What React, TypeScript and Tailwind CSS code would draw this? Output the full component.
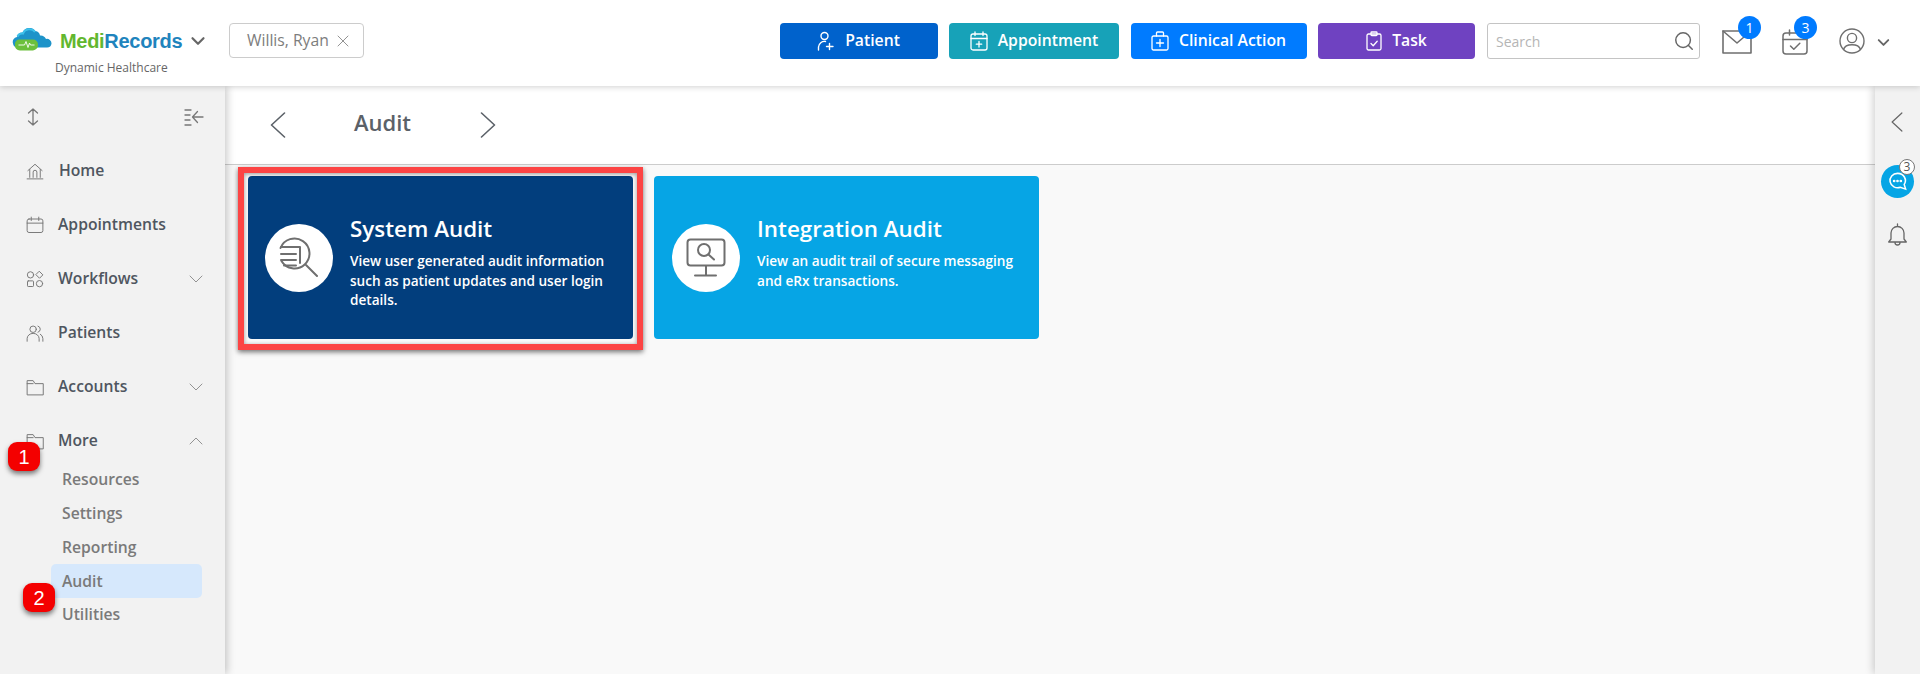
import React from "react";
import { ChevronDown, ChevronUp, X, Search } from "lucide-react";

type IP = { className?: string };
const S = ({ children, className, box = "0 0 24 24", sw = 1.3 }: { children: React.ReactNode; className?: string; box?: string; sw?: number }) => (
  <svg viewBox={box} fill="none" stroke="currentColor" strokeWidth={sw} strokeLinecap="round" strokeLinejoin="round" className={className}>
    {children}
  </svg>
);

const HomeIcon = ({ className }: IP) => (
  <S className={className}>
    <path d="M2.5 11.5 12 3l9.5 8.5M5 10v10.5M19 10v10.5M9.5 20.5v-7a2.5 2.5 0 0 1 5 0v7" />
    <path d="M1.5 22.5h21" />
  </S>
);
const CalIcon = ({ className }: IP) => (
  <S className={className}>
    <rect x="1.5" y="4" width="21" height="18" rx="2.5" />
    <path d="M1.5 9.5h21M7 1.5v4.5M17 1.5v4.5" />
  </S>
);
const FlowIcon = ({ className }: IP) => (
  <S className={className}>
    <circle cx="6" cy="6.5" r="4.2" />
    <path d="M18 2l4.5 4.5L18 11l-4.5-4.5z" />
    <rect x="2" y="14.5" width="8" height="7.5" rx="1" />
    <circle cx="18" cy="18.2" r="4.2" />
  </S>
);
const PeopleIcon = ({ className }: IP) => (
  <S className={className}>
    <circle cx="9.5" cy="7" r="4.3" />
    <path d="M1.5 23v-3.5a8 7 0 0 1 16 0V23" />
    <path d="M16 2.8a4.3 4.3 0 0 1 0 8.2M19 13.5a7 7 0 0 1 3.5 6V23" />
  </S>
);
const FolderIcon = ({ className }: IP) => (
  <S className={className}>
    <path d="M1.5 22V3.5h8l2.5 4h11V22z" />
    <path d="M9.5 7.5H1.5" />
  </S>
);
const MailIcon = ({ className }: IP) => (
  <S className={className} box="0 0 30 24" sw={1.6}>
    <rect x="1" y="1" width="28" height="22" />
    <path d="M1 1l14 12L29 1" />
  </S>
);
const CalCheckIcon = ({ className }: IP) => (
  <S className={className} box="0 0 26 26" sw={1.5}>
    <rect x="1" y="4" width="24" height="21" rx="3" />
    <path d="M1 10.5h24M7.5 1v5M18.5 1v5M8.5 17l3.3 3.3 6-6" />
  </S>
);
const UserCircleIcon = ({ className }: IP) => (
  <S className={className} box="0 0 26 26" sw={1.4}>
    <circle cx="13" cy="13" r="12" />
    <circle cx="13" cy="10" r="4.6" />
    <path d="M4.5 21.5c1-3.5 4.5-4.8 8.5-4.8s7.5 1.3 8.5 4.8" />
  </S>
);
const AuditIcon = () => (
  <S className="h-[42px] w-[42px] text-[#6f6f6f]" box="0 0 42 42" sw={2}>
    <path d="M2.5 11a15 15 0 1 1 1 13" />
    <path d="M3 10h19v16M3 17h15M3 23h15M6 28.5h12M28 28l11 11" />
  </S>
);
const MonitorIcon = () => (
  <S className="h-[40px] w-[40px] text-[#6f6f6f]" box="0 0 40 40" sw={2}>
    <rect x="1.5" y="1.5" width="37" height="26" rx="3" />
    <path d="M20 28v9M9 37.5h21" />
    <circle cx="18" cy="12" r="6" />
    <path d="M22.5 16.5l5.5 5" />
  </S>
);
const Chevron = ({ dir, className }: { dir: "l" | "r"; className: string }) => (
  <svg viewBox="0 0 16 26" fill="none" stroke="currentColor" strokeWidth="1.6" strokeLinecap="round" strokeLinejoin="round" className={className}>
    <path d={dir === "l" ? "M14.500 1 1.500 13l13 12" : "M1.500 1l13 12-13 12"} />
  </svg>
);
const Logo = () => (
  <svg viewBox="0 0 40 23" className="h-[23px] w-[40px]">
    <path d="M1 15.500a5 5 0 0 1 4-6.500 5.500 5.500 0 0 1 5.500-4.500 7.500 7.500 0 0 1 13-1.500 5.500 5.500 0 0 1 4.500 4.500 6 6 0 0 1 6 3.500 4.500 4.500 0 0 1 5.500 4.500 4.500 4.500 0 0 1-4.500 4H5a4.500 4.500 0 0 1-4-4z" fill="#1d93c9" />
    <path d="M5.500 8.500a5 5 0 0 1 5.500-3 7 7 0 0 1 12-1.500" stroke="#3cc0ea" strokeWidth="2" fill="none" />
    <path d="M3 16.500a4.500 4.500 0 0 1 5-5h13a5 5 0 0 1 5 5 5.500 5.500 0 0 1-5 6H8a5 5 0 0 1-5-6z" fill="#6cc03c" />
    <path d="M6.500 17h6l1.500-3.500 2 6 1.500-4.500 1 2h4" stroke="#fff" strokeWidth=".9" fill="none" />
  </svg>
);

const actions = [
  { t: "Patient", w: "w-[158px]", bg: "bg-[#0062cc]", k: "p" },
  { t: "Appointment", w: "w-[170px]", bg: "bg-[#17a2b8]", k: "a" },
  { t: "Clinical Action", w: "w-[176px]", bg: "bg-[#007bff]", k: "c" },
  { t: "Task", w: "w-[157px]", bg: "bg-[#6f42c1]", k: "t" },
];
const ActionIcon = ({ k }: { k: string }) => {
  if (k === "p")
    return (
      <S className="h-[20px] w-[18px]" box="0 0 18 20" sw={1.4}>
        <circle cx="7.5" cy="5" r="3.5" />
        <path d="M1.500 19v-3a6 6 0 0 1 7-5.500M12.500 12.500v6M9.500 15.500h6.500" />
      </S>
    );
  if (k === "a")
    return (
      <S className="h-[20px] w-[18px]" box="0 0 18 20" sw={1.3}>
        <rect x="1" y="3" width="16" height="16" rx="2" />
        <path d="M1 7.500h16M5 1v3.500M13 1v3.500M9 10.500v5.500M6.300 13.200h5.400" />
      </S>
    );
  if (k === "c")
    return (
      <S className="h-[20px] w-[18px]" box="0 0 18 20" sw={1.3}>
        <rect x="1" y="5" width="16" height="14" rx="1.500" />
        <path d="M5.500 5V2a1 1 0 0 1 1-1h5a1 1 0 0 1 1 1v3M9 8.500v7M5.500 12h7" />
      </S>
    );
  return (
    <S className="h-[20px] w-[16px]" box="0 0 16 20" sw={1.3}>
      <rect x="1" y="3" width="14" height="16" rx="1.500" />
      <rect x="5" y="1" width="6" height="3.500" rx=".8" />
      <path d="M5 12.500l2.200 2.200 4-4.500" />
    </S>
  );
};

const nav = [
  { t: "Home", I: HomeIcon, x: "pl-[1px]" },
  { t: "Appointments", I: CalIcon, x: "" },
  { t: "Workflows", I: FlowIcon, x: "", c: "d" },
  { t: "Patients", I: PeopleIcon, x: "" },
  { t: "Accounts", I: FolderIcon, x: "", c: "d" },
  { t: "More", I: FolderIcon, x: "", c: "u" },
];
const subs = ["Resources", "Settings", "Reporting", "Audit", "Utilities"];

const Card = ({ bg, pad, icon, title, lines }: { bg: string; pad: string; icon: React.ReactNode; title: string; lines: string[] }) => (
  <div className={`flex h-[163px] w-[384.5px] items-start rounded-[4px] pt-[37px] ${pad} ${bg}`}>
    <div className="mt-[11px] flex h-[68px] w-[68px] shrink-0 items-center justify-center rounded-full bg-white">{icon}</div>
    <div className="ml-[17px] text-white">
      <div className="text-[22.400px] font-semibold leading-[32px]">{title}</div>
      <div className="mt-[6px] text-[13.600px] font-semibold leading-[19.500px]">
        {lines.map((l) => (
          <div key={l}>{l}</div>
        ))}
      </div>
    </div>
  </div>
);

const Marker = ({ n, className }: { n: string; className: string }) => (
  <div className={`absolute flex h-[29px] w-[32px] items-center justify-center rounded-[9px] bg-[#f40000] text-[20px] text-white shadow-[0_3px_5px_rgba(0,0,0,0.5)] font-['Liberation_Sans',sans-serif] ${className}`}>
    {n}
  </div>
);

export default function App() {
  return (
    <div className="relative flex h-[674px] w-[1920px] flex-col overflow-hidden bg-white font-['Open_Sans',sans-serif]">
      <header className="relative z-20 flex h-[86px] shrink-0 items-start bg-white shadow-[0_1px_6px_rgba(0,0,0,0.18)]">
        <div className="ml-[12px] w-[217px] shrink-0">
          <div className="mt-[27px] flex h-[24px] items-center">
            <Logo />
            <span className="ml-[8px] mt-[3px] font-['Liberation_Sans',sans-serif] text-[20px] font-bold leading-[24px] tracking-[-0.3px]">
              <span className="text-[#62b72f]">Medi</span>
              <span className="text-[#1f84bd]">Records</span>
            </span>
            <ChevronDown className="ml-[5px] mt-[3px] h-[22px] w-[22px] text-[#666]" strokeWidth={2.4} />
          </div>
          <div className="ml-[43px] mt-[9px] text-[12px] font-medium leading-[16px] text-[#666]">Dynamic Healthcare</div>
        </div>
        <div className="mt-[23px] flex h-[35px] w-[135px] items-center rounded-[4px] border border-[#ccc] pl-[17px] text-[15.700px] text-[#7d7d7d]">
          Willis, Ryan
          <X className="ml-[4px] h-[20px] w-[20px]" strokeWidth={1} />
        </div>
        <div className="ml-auto mt-[23px] flex items-center gap-[11.500px]">
          {actions.map((a) => (
            <div key={a.t} className={`flex h-[36px] items-center justify-center gap-[10px] rounded-[4px] text-[15.750px] font-semibold text-white ${a.w} ${a.bg}`}>
              <ActionIcon k={a.k} />
              {a.t}
            </div>
          ))}
        </div>
        <div className="ml-[12px] mt-[23px] flex h-[36px] w-[213px] items-center justify-between rounded-[3px] border border-[#c4c4c4] pl-[8px] pr-[4px] text-[14px] text-[#b5b5b5]">
          Search
          <Search className="h-[22px] w-[22px] text-[#666]" strokeWidth={1.6} />
        </div>
        <div className="relative ml-[22px] mt-[30px] h-[24px] w-[30px]">
          <MailIcon className="h-[24px] w-[30px] text-[#6f6f6f]" />
          <span className="absolute left-[16px] top-[-14px] flex h-[23px] w-[23px] items-center justify-center rounded-full bg-[#007bff] text-[14px] text-white">1</span>
        </div>
        <div className="relative ml-[30px] mt-[29px] h-[26px] w-[26px]">
          <CalCheckIcon className="h-[26px] w-[26px] text-[#6f6f6f]" />
          <span className="absolute left-[12px] top-[-13px] flex h-[23px] w-[23px] items-center justify-center rounded-full bg-[#007bff] text-[14px] text-white">3</span>
        </div>
        <UserCircleIcon className="ml-[31px] mt-[28px] h-[26px] w-[26px] text-[#6f6f6f]" />
        <ChevronDown className="ml-[9px] mr-[27px] mt-[33px] h-[19px] w-[19px] text-[#666]" strokeWidth={2.4} />
      </header>

      <div className="flex min-h-0 flex-1">
        <aside className="relative z-10 w-[225px] shrink-0 bg-[#f2f2f2] shadow-[2px_0_8px_rgba(0,0,0,0.22)]">
          <div className="flex h-[58px] items-center justify-between pl-[27px] pr-[21px] pt-[4px] text-[#777]">
            <S className="h-[18px] w-[12px]" box="0 0 12 18" sw={1.3}>
              <path d="M6 1v16M1.500 5 6 1l4.500 4M1.500 13 6 17l4.500-4" />
            </S>
            <S className="h-[18px] w-[20px]" box="0 0 20 18" sw={1.3}>
              <path d="M1 2h6M1 7h5M1 12h5M1 17h6M19 9H9M13.500 3.500 8.500 9l5 5.500" />
            </S>
          </div>
          {nav.map(({ t, I, c, x }) => (
            <div key={t} className="flex h-[54px] items-center pl-[26px] pr-[17px] text-[15.700px] font-semibold text-[#4f5660]">
              <I className="h-[18px] w-[18px] shrink-0 text-[#777]" />
              <span className={`ml-[14px] ${x}`}>{t}</span>
              {c === "d" && <ChevronDown className="ml-auto h-[24px] w-[24px] text-[#888]" strokeWidth={0.9} />}
              {c === "u" && <ChevronUp className="ml-auto h-[24px] w-[24px] text-[#888]" strokeWidth={0.9} />}
            </div>
          ))}
          <div className="ml-[51px] mt-[-5px] w-[151px]">
            {subs.map((s) => (
              <div key={s} className={`flex h-[33.800px] items-center rounded-[5px] pl-[11px] text-[15.700px] font-semibold text-[#7a7a7a] ${s === "Audit" ? "bg-[#d6e8fc]" : ""}`}>
                {s}
              </div>
            ))}
          </div>
        </aside>

        <main className="min-w-0 flex-1 bg-[#f9f9f9]">
          <div className="flex h-[79px] items-center border-b border-[#ccc] bg-white pl-[45px] text-[#5b6168]">
            <Chevron dir="l" className="mt-[-1px] h-[26px] w-[16px]" />
            <span className="ml-[68px] mt-[-6px] w-[126px] text-[22px] font-semibold">Audit</span>
            <Chevron dir="r" className="mt-[-1px] h-[26px] w-[16px]" />
          </div>
          <div className="flex gap-[21.500px] pl-[23px] pt-[11px]">
            <Card bg="bg-[#023e7d]" pad="pl-[17px]" icon={<AuditIcon />} title="System Audit" lines={["View user generated audit information", "such as patient updates and user login", "details."]} />
            <Card bg="bg-[#06a5e5]" pad="pl-[18px]" icon={<MonitorIcon />} title="Integration Audit" lines={["View an audit trail of secure messaging", "and eRx transactions."]} />
          </div>
        </main>

        <aside className="relative z-10 w-[45px] shrink-0 bg-[#f2f2f2] shadow-[-2px_0_8px_rgba(0,0,0,0.18)]">
          <div className="flex flex-col items-center pt-[26px] text-[#666]">
            <Chevron dir="l" className="ml-[-2px] h-[20px] w-[12px]" />
            <div className="relative mt-[33px] flex h-[33px] w-[33px] items-center justify-center rounded-full bg-[#06a5e5]">
              <svg viewBox="0 0 22 22" className="h-[21px] w-[21px]" fill="none" stroke="#fff" strokeWidth="1.600">
                <path d="M11 2.500a8 7.500 0 1 0 3 14.500l5.500 2-1.500-5A8 7.500 0 0 0 11 2.500z" />
                <circle cx="7.500" cy="10.500" r=".6" fill="#fff" />
                <circle cx="11" cy="10.500" r=".6" fill="#fff" />
                <circle cx="14.500" cy="10.500" r=".6" fill="#fff" />
              </svg>
              <span className="absolute right-[-1px] top-[-6px] flex h-[16px] w-[16px] items-center justify-center rounded-full border border-[#777] bg-white text-[12px] leading-none text-[#555]">3</span>
            </div>
            <S className="mt-[25px] h-[23px] w-[19px] text-[#666]" box="0 0 19 23" sw={1.300}>
              <path d="M9.500 1v2.500M3 16V10a6.500 6.500 0 0 1 13 0v6l2.300 3H.7zM7 19.500a2.500 2.500 0 0 0 5 0" />
            </S>
          </div>
        </aside>
      </div>

      <Marker n="1" className="left-[8px] top-[442px] z-30" />
      <Marker n="2" className="left-[23px] top-[583px] z-30" />
      <div className="absolute left-[238px] top-[167px] z-30 h-[183px] w-[405px] border-[6px] border-[#fc4444] shadow-[0_2px_5px_rgba(0,0,0,0.55),inset_0_1px_4px_rgba(0,0,0,0.4)]" />
    </div>
  );
}
